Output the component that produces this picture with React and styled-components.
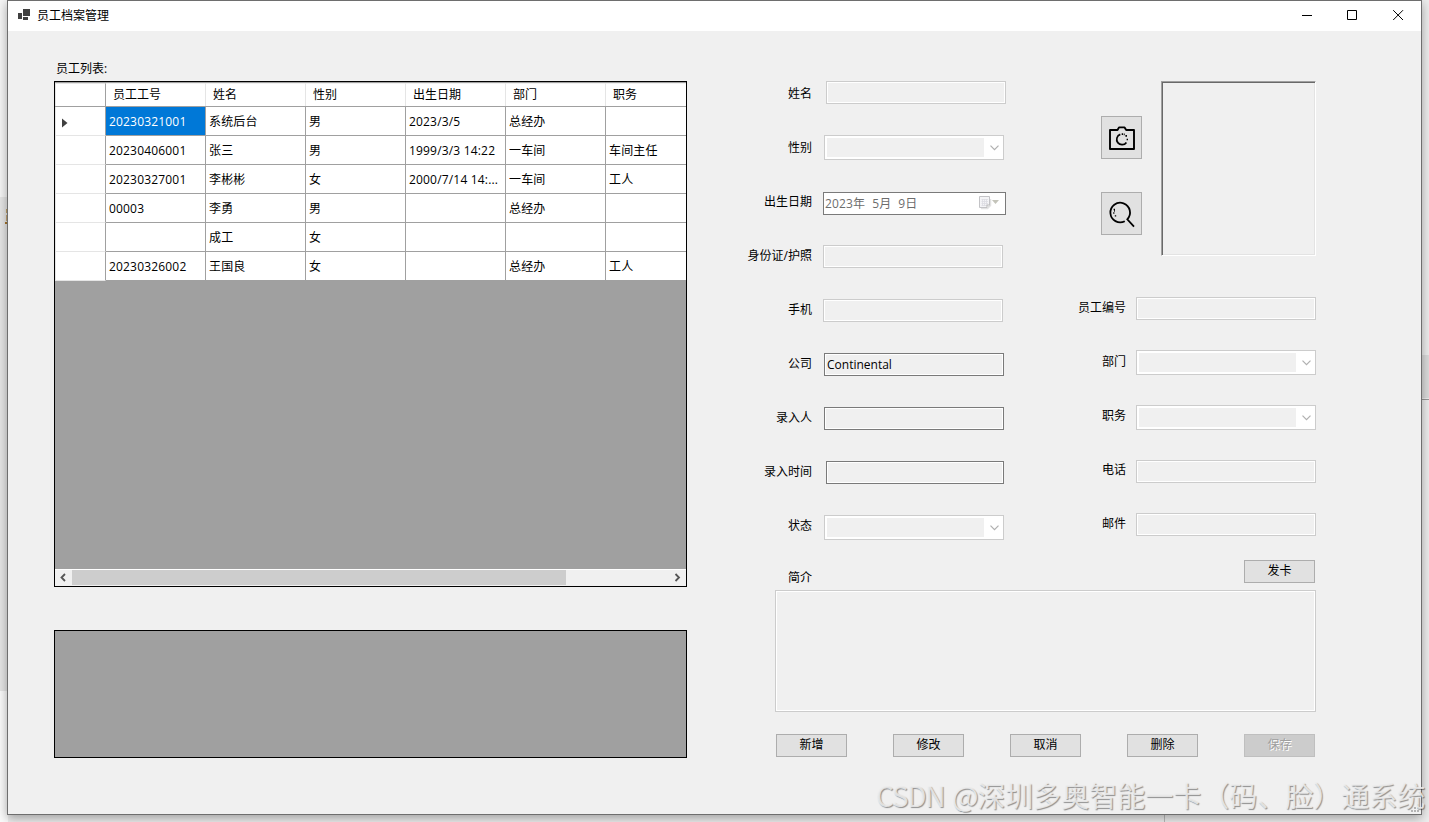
import React from "react";
import styled, { createGlobalStyle, css } from "styled-components";

const columns = ["员工工号", "姓名", "性别", "出生日期", "部门", "职务"];

const employees = [
  ["20230321001", "系统后台", "男", "2023/3/5", "总经办", ""],
  ["20230406001", "张三", "男", "1999/3/3 14:22", "一车间", "车间主任"],
  ["20230327001", "李彬彬", "女", "2000/7/14 14:...", "一车间", "工人"],
  ["00003", "李勇", "男", "", "总经办", ""],
  ["", "成工", "女", "", "", ""],
  ["20230326002", "王国良", "女", "", "总经办", "工人"],
];

const personal = [
  { label: "姓名", type: "text", top: 15, left: 14 },
  { label: "性别", type: "combo", top: 15, left: 12 },
  { label: "出生日期", type: "date", top: 18, left: 11 },
  { label: "身份证/护照", type: "text", top: 17, left: 11 },
  { label: "手机", type: "text", top: 17, left: 11 },
  { label: "公司", type: "text", top: 17, left: 12, readOnly: true, value: "Continental" },
  { label: "录入人", type: "text", top: 17, left: 12, readOnly: true },
  { label: "录入时间", type: "text", top: 17, left: 14, width: 178, readOnly: true },
  { label: "状态", type: "combo", top: 17, left: 12 },
];

const work = [
  { label: "员工编号", type: "text", top: 17, left: 10 },
  { label: "部门", type: "combo", top: 16, left: 10 },
  { label: "职务", type: "combo", top: 17, left: 10 },
  { label: "电话", type: "text", top: 18, left: 10 },
  { label: "邮件", type: "text", top: 17, left: 10 },
];

const actions = ["新增", "修改", "取消", "删除"];

function Field({ field }) {
  const { label, type, top, left, width, readOnly, value } = field;
  return (
    <FieldRow>
      <Label>{label}</Label>
      {type === "text" && (
        <TextBox $top={top} $left={left} $width={width} $readOnly={readOnly}>
          {value}
        </TextBox>
      )}
      {type === "combo" && (
        <Combo $top={top} $left={left}>
          <ComboValue />
          <svg width="9" height="6" viewBox="0 0 9 6">
            <path d="M0.5 0.7L4.5 4.7L8.5 0.7" fill="none" stroke="#b0b0b0" strokeWidth="1.2" />
          </svg>
        </Combo>
      )}
      {type === "date" && (
        <DatePicker $top={top} $left={left}>
          <span>2023年</span>
          <span>5月</span>
          <span>9日</span>
          <CalendarIcon />
        </DatePicker>
      )}
    </FieldRow>
  );
}

function CalendarIcon() {
  return (
    <svg width="21" height="14" viewBox="0 0 21 14">
      <path d="M2 12.5H8.5L11.5 9.5V3" fill="none" stroke="#e2e2e2" strokeWidth="1.5" />
      <path d="M0.5 0.5H10.5V9L8 11.5H0.5Z" fill="#f4f4f6" stroke="#c3c3c6" />
      <path d="M2.5 3.5H9M2.5 5.5H9M2.5 7.5H9M2.5 9.5H7M3.5 3V10M5.5 3V10M7.5 3V10" stroke="#dcdce2" strokeWidth="0.8" />
      <path d="M8 11.5V9H10.5" fill="#fff" stroke="#b8b8b8" />
      <path d="M13 4H20L16.5 8Z" fill="#c4c4ba" />
    </svg>
  );
}

function CameraIcon() {
  return (
    <svg width="28" height="26" viewBox="0 0 28 26" fill="none" stroke="#000" strokeWidth="1.9">
      <path d="M2 5H9.5L11 2.4H16.6L18.2 5H26V24H2Z" strokeLinejoin="round" />
      <path d="M12.3 9.4A5.3 5.3 0 1 0 18.4 17.4" strokeWidth="1.7" />
      <path d="M13.7 9.1H15M17.4 10.9H19M18.6 14.5H20M15.7 9.4H16.7" strokeWidth="1.7" />
    </svg>
  );
}

function SearchIcon() {
  return (
    <svg width="28" height="28" viewBox="0 0 28 28" fill="none" stroke="#000">
      <path d="M16.8 21.2A9.8 9.8 0 1 1 19.3 19.3L26 26.6" strokeWidth="1.8" />
      <path d="M5.6 9.5H7M5.2 13H6.4M6.8 15.8H8.2M6.2 11H7" strokeWidth="1.3" />
    </svg>
  );
}

function App() {
  return (
    <Desktop>
      <GlobalStyle />
      <Backdrop $x={0} $y={0} $w={8} $h={197} $color="#f6f6f6" />
      <Backdrop $x={0} $y={197} $w={8} $h={494} $color="#e6e6e6" />
      <Backdrop $x={0} $y={691} $w={8} $h={131} $color="#fbfbfb" />
      <Backdrop $x={6} $y={209} $w={2} $h={4} $color="#c3a46a" />
      <Backdrop $x={6} $y={215} $w={2} $h={6} $color="#c9a878" />
      <Backdrop $x={5} $y={222} $w={3} $h={2} $color="#a8762c" />
      <Backdrop $x={1422} $y={355} $w={7} $h={43} $color="#dcdcdc" />
      <Backdrop $x={1422} $y={399} $w={7} $h={1} $color="#999" />
      <Backdrop $x={1164} $y={815} $w={1} $h={7} $color="#bbb" />
      <Window>
        <TitleBar>
          <svg width="12" height="11" viewBox="0 0 12 11" fill="#404040">
            <path d="M0 4H4V10H0ZM5 0H12V7H5ZM5 8H10V11H5Z" />
          </svg>
          <h1>员工档案管理</h1>
          <svg width="102" height="11" viewBox="0 0 102 11" fill="none" stroke="#000">
            <path d="M0 5.5H10M45.5 0.5H54.5V9.5H45.5ZM91.2 0.2L101 10M101 0.2L91.2 10" />
          </svg>
        </TitleBar>

        <Client>
          <ListSide>
            <ListLabel>员工列表:</ListLabel>
            <DataGrid>
              <HeaderRow>
                <Corner />
                {columns.map((name) => (
                  <HeaderCell key={name}>{name}</HeaderCell>
                ))}
              </HeaderRow>
              {employees.map((row, i) => (
                <Row key={row[1]}>
                  <RowHead>
                    {i === 0 && (
                      <svg width="6" height="10" viewBox="0 0 6 10">
                        <path d="M0 0.5L5.5 5L0 9.5Z" fill="#404040" />
                      </svg>
                    )}
                  </RowHead>
                  {row.map((value, j) => (
                    <Cell key={j} $selected={i === 0 && j === 0}>
                      {value}
                    </Cell>
                  ))}
                </Row>
              ))}
              <Scrollbar>
                <svg width="17" height="15" viewBox="0 0 17 15">
                  <path d="M10 4L6.5 7.5L10 11" fill="none" stroke="#555" strokeWidth="1.8" />
                </svg>
                <Thumb />
                <svg width="17" height="15" viewBox="0 0 17 15">
                  <path d="M6.5 4L10 7.5L6.5 11" fill="none" stroke="#555" strokeWidth="1.8" />
                </svg>
              </Scrollbar>
            </DataGrid>
            <EmptyGrid />
          </ListSide>

          <DetailSide>
            <Columns>
              <div>
                {personal.map((field) => (
                  <Field key={field.label} field={field} />
                ))}
              </div>
              <div>
                <PhotoArea>
                  <PhotoButtons>
                    <IconButton>
                      <CameraIcon />
                    </IconButton>
                    <IconButton>
                      <SearchIcon />
                    </IconButton>
                  </PhotoButtons>
                  <Photo />
                </PhotoArea>
                {work.map((field) => (
                  <Field key={field.label} field={field} />
                ))}
              </div>
            </Columns>
            <MemoHead>
              <MemoLabel>简介</MemoLabel>
              <Button>发卡</Button>
            </MemoHead>
            <Memo />
            <Actions>
              {actions.map((name) => (
                <Button key={name}>{name}</Button>
              ))}
              <Button disabled>保存</Button>
            </Actions>
          </DetailSide>
        </Client>
        <SizeGrip width="9" height="9" viewBox="0 0 9 9" fill="#b4b4b4">
          <path d="M6 0H8V2H6ZM3 3H5V5H3ZM6 3H8V5H6ZM0 6H2V8H0ZM3 6H5V8H3ZM6 6H8V8H6Z" />
        </SizeGrip>
      </Window>
      <Watermark>
        <span>CSDN @</span>深圳多奥智能一卡（码、脸）通系统
      </Watermark>
    </Desktop>
  );
}

//styled components

const GlobalStyle = createGlobalStyle`
  * {
    box-sizing: border-box;
  }
  body {
    margin: 0;
    overflow: hidden;
    font-family: "Open Sans", "Noto Sans CJK SC", sans-serif;
    font-size: 12px;
    color: #000;
  }
  svg {
    display: block;
    flex: none;
  }
`;

const Desktop = styled.div`
  position: relative;
  width: 1429px;
  height: 822px;
  padding-left: 7px;
  background: #eeeeee;
  overflow: hidden;
`;

// pieces of the windows that lie behind this one
const Backdrop = styled.div`
  position: absolute;
  left: ${(p) => p.$x}px;
  top: ${(p) => p.$y}px;
  width: ${(p) => p.$w}px;
  height: ${(p) => p.$h}px;
  background: ${(p) => p.$color};
`;

const Window = styled.div`
  position: relative;
  width: 1415px;
  height: 815px;
  border: 1px solid #6e6e6e;
  background: #f0f0f0;
  box-shadow: 0 3px 10px rgba(0, 0, 0, 0.35);
`;

const TitleBar = styled.header`
  display: flex;
  align-items: center;
  height: 30px;
  padding: 0 17px 0 10px;
  background: #fff;
  svg:first-child {
    margin-top: -3px;
  }
  svg:last-child {
    margin-top: -1px;
  }
  h1 {
    flex: 1;
    margin: 0 0 0 7px;
    font-size: 12px;
    font-weight: 400;
    line-height: 30px;
    height: 30px;
  }
`;

const Client = styled.main`
  display: flex;
  padding-left: 46px;
`;

const ListSide = styled.section`
  width: 633px;
  padding-top: 27px;
`;

const ListLabel = styled.div`
  height: 23px;
  padding-left: 2px;
  line-height: 22px;
`;

const DataGrid = styled.div`
  display: flex;
  flex-direction: column;
  height: 506px;
  border: 1px solid #000;
  background: #a0a0a0;
  overflow: hidden;
`;

const gridRow = css`
  display: grid;
  grid-template-columns: 51px repeat(6, 100px);
  flex: none;
`;

const HeaderRow = styled.div`
  ${gridRow}
  height: 25px;
  border-top: 1px solid #a0a0a0;
  border-bottom: 1px solid #a0a0a0;
`;

const HeaderCell = styled.div`
  padding-left: 7px;
  border-top: 1px solid #f0f0f0;
  border-right: 1px solid #e5e5e5;
  background: #fff;
  line-height: 22px;
`;

const Corner = styled.div`
  border: 1px solid #e5e5e5;
  border-right-color: #a0a0a0;
  border-bottom: 0;
  background: #fff;
`;

const Row = styled.div`
  ${gridRow}
  height: 29px;
`;

const RowHead = styled.div`
  display: flex;
  align-items: center;
  padding: 3px 0 0 6px;
  border-left: 1px solid #e5e5e5;
  border-right: 1px solid #a0a0a0;
  border-bottom: 1px solid #e5e5e5;
  background: #fff;
`;

const Cell = styled.div`
  padding-left: 3px;
  border-right: 1px solid #a0a0a0;
  border-bottom: 1px solid #a0a0a0;
  background: ${(p) => (p.$selected ? "#0078d7" : "#fff")};
  color: ${(p) => (p.$selected ? "#fff" : "#000")};
  line-height: 30px;
  letter-spacing: 0.18px;
  white-space: nowrap;
  overflow: hidden;
`;

const Scrollbar = styled.div`
  display: flex;
  height: 17px;
  margin-top: auto;
  border-top: 1px solid #fff;
  background: #f0f0f0;
  svg:last-child {
    margin-left: auto;
  }
`;

const Thumb = styled.div`
  width: 494px;
  height: 15px;
  background: #cdcdcd;
`;

const EmptyGrid = styled.div`
  height: 128px;
  margin-top: 43px;
  border: 1px solid #000;
  background: #a0a0a0;
`;

const DetailSide = styled.section`
  width: 576px;
  margin-left: 53px;
  padding-top: 35px;
`;

const Columns = styled.div`
  display: flex;
  justify-content: space-between;
  height: 486px;
`;

const FieldRow = styled.div`
  display: flex;
  align-items: flex-start;
  height: 54px;
`;

const Label = styled.label`
  width: 72px;
  line-height: 55px;
  text-align: right;
  white-space: nowrap;
`;

const control = css`
  display: flex;
  align-items: center;
  margin: ${(p) => p.$top}px 0 0 ${(p) => p.$left}px;
`;

const TextBox = styled.div`
  ${control}
  width: ${(p) => p.$width || 180}px;
  height: 23px;
  padding-left: 2px;
  border: 1px solid ${(p) => (p.$readOnly ? "#7a7a7a" : "#cccccc")};
  box-shadow: inset 0 0 0 1px #fff;
`;

const Combo = styled.div`
  ${control}
  width: 180px;
  height: 25px;
  padding: 2px;
  border: 1px solid #cccccc;
  background: #fff;
  svg {
    margin-left: 6px;
  }
`;

const ComboValue = styled.div`
  width: 157px;
  height: 19px;
  background: #f0f0f0;
`;

const DatePicker = styled.div`
  ${control}
  width: 183px;
  height: 23px;
  padding: 0 5px 1px 1px;
  border: 1px solid #7a7a7a;
  background: #fff;
  color: #6d6d6d;
  letter-spacing: 0.14px;
  span {
    margin-right: 7px;
  }
  svg {
    margin-left: auto;
  }
`;

const PhotoArea = styled.div`
  display: flex;
  justify-content: flex-end;
  height: 214px;
  padding-top: 15px;
`;

const PhotoButtons = styled.div`
  display: flex;
  flex-direction: column;
  gap: 33px;
  margin-right: 19px;
  padding-top: 35px;
`;

const IconButton = styled.button`
  display: flex;
  align-items: center;
  justify-content: center;
  width: 41px;
  height: 43px;
  padding: 0;
  border: 1px solid #adadad;
  background: #e1e1e1;
`;

const Photo = styled.div`
  width: 155px;
  height: 175px;
  border: 1px solid;
  border-color: #a0a0a0 #fff #fff #a0a0a0;
  box-shadow: inset 1px 1px 0 #696969, inset -1px -1px 0 #e3e3e3;
`;

const MemoHead = styled.div`
  display: flex;
  justify-content: space-between;
  height: 38px;
  padding: 8px 1px 0 0;
`;

const MemoLabel = styled(Label)`
  line-height: 35px;
`;

const Memo = styled.div`
  height: 122px;
  margin-left: 35px;
  border: 1px solid #cccccc;
  box-shadow: inset 0 0 0 1px #fff;
`;

const Actions = styled.div`
  display: flex;
  justify-content: space-between;
  padding: 22px 1px 0 36px;
`;

const Button = styled.button`
  width: 71px;
  height: 23px;
  padding: 0 0 2px;
  border: 1px solid #adadad;
  background: #e1e1e1;
  color: #000;
  font: inherit;
  line-height: 19px;
  &:disabled {
    border-color: #bfbfbf;
    background: #cccccc;
    color: #a0a0a0;
    text-shadow: 1px 1px 0 #fff;
  }
`;

const SizeGrip = styled.svg`
  position: absolute;
  right: 1px;
  bottom: 1px;
`;

const Watermark = styled.div`
  position: absolute;
  left: 876px;
  top: 775px;
  font-family: "Noto Sans CJK SC", sans-serif;
  font-size: 28px;
  font-weight: 400;
  line-height: 40px;
  color: rgba(238, 238, 238, 0.85);
  text-shadow: 1px 1px 1px rgba(0, 0, 0, 0.4);
  white-space: nowrap;
  span {
    letter-spacing: -1.3px;
    word-spacing: 3px;
  }
`;

export default App;
